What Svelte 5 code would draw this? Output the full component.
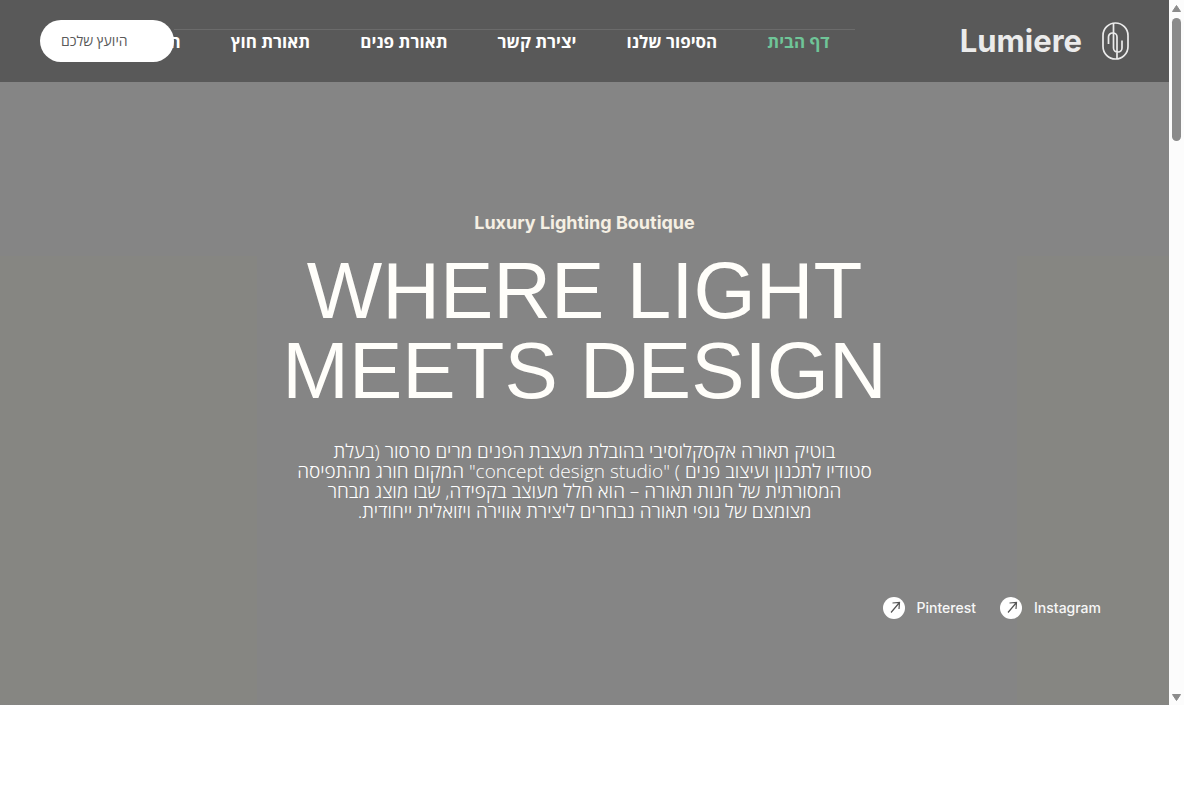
<script>
	const navItems = [
		{ label: 'דף הבית', href: '#home', current: true },
		{ label: 'הסיפור שלנו', href: '#story' },
		{ label: 'יצירת קשר', href: '#contact' },
		{ label: 'תאורת פנים', href: '#indoor' },
		{ label: 'תאורת חוץ', href: '#outdoor' },
		{ label: 'השראה', href: '#inspiration' }
	];

	const socialLinks = [
		{ label: 'Pinterest', href: '#pinterest' },
		{ label: 'Instagram', href: '#instagram' }
	];

	const introLines = [
		'בוטיק תאורה אקסקלוסיבי בהובלת מעצבת הפנים מרים סרסור (בעלת',
		'סטודיו לתכנון ועיצוב פנים ) "concept design studio" המקום חורג מהתפיסה',
		'המסורתית של חנות תאורה – הוא חלל מעוצב בקפידה, שבו מוצג מבחר',
		'מצומצם של גופי תאורה נבחרים ליצירת אווירה ויזואלית ייחודית.'
	];
</script>

<div class="frame">
	<div class="page" dir="rtl">
		<header class="header">
			<a class="brand" href="#home">
				<svg class="brand__mark" viewBox="0 0 27 38" aria-hidden="true">
					<rect x="1" y="1" width="25" height="36" rx="12.5" />
					<path d="M11.500 1v25a4 4 0 0 0 4 4h.5a4 4 0 0 0 4-4v-7.500M6.500 22v-7a4 4 0 0 1 4-4h.5a4 4 0 0 1 4 4v22" />
				</svg>
				<span class="brand__name">Lumiere</span>
			</a>

			<nav class="nav" aria-label="ראשי">
				<ul class="nav__list">
					{#each navItems as item}
						<li>
							<a
								class="nav__link"
								class:nav__link--current={item.current}
								href={item.href}
								aria-current={item.current ? 'page' : undefined}>{item.label}</a
							>
						</li>
					{/each}
				</ul>
			</nav>

			<button class="advisor" type="button">היועץ שלכם</button>
		</header>

		<main class="hero">
			<p class="hero__eyebrow" dir="ltr">Luxury Lighting Boutique</p>
			<h1 class="hero__title" dir="ltr">WHERE LIGHT<br />MEETS DESIGN</h1>
			<p class="hero__intro">
				{#each introLines as line, i}
					{#if i > 0}<br />{/if}{line}
				{/each}
			</p>

			<ul class="social" dir="ltr">
				{#each socialLinks as link}
					<li>
						<a class="social__link" href={link.href}>
							<svg class="social__icon" viewBox="0 0 22 22" aria-hidden="true">
								<circle cx="11" cy="11" r="11" />
								<path d="M8 15.500 16.500 5.500M9.500 6l7-.5-.5 6.500" />
							</svg>
							{link.label}
						</a>
					</li>
				{/each}
			</ul>
		</main>
	</div>

	<div class="scrollbar" aria-hidden="true">
		<svg viewBox="0 0 9 7"><path d="M4.500 0.500 8.500 6.500h-8z" /></svg>
		<div class="scrollbar__track"><div class="scrollbar__thumb"></div></div>
		<svg viewBox="0 0 9 7"><path d="M4.500 6.500 8.500 0.500h-8z" /></svg>
	</div>
</div>

<style>
	:global(body) {
		background: #fff;
	}

	ul {
		list-style: none;
		margin: 0;
		padding: 0;
	}

	a {
		color: inherit;
		text-decoration: none;
	}

	.frame {
		display: flex;
		margin-right: 16px;
		font-family: 'Open Sans', 'Noto Sans', sans-serif;
	}

	.page {
		flex: 1;
		min-width: 0;
	}

	.header {
		display: flex;
		align-items: center;
		padding: 20px 40px;
		overflow: hidden;
		background: #595959;
	}

	.brand {
		display: flex;
		align-items: center;
		gap: 20px;
		margin-left: 105px;
		color: #ebebeb;
	}
	.brand__mark {
		width: 27px;
		height: 38px;
		fill: none;
		stroke: #ebebeb;
		stroke-width: 1.7;
	}
	.brand__name {
		font-family: Inter, sans-serif;
		font-size: 31px;
		font-weight: 700;
		line-height: 40px;
	}

	.nav {
		flex: 1;
		min-width: 0;
		border-top: 1px solid #6b6b6b;
	}
	.nav__list {
		display: flex;
	}
	.nav__link {
		display: block;
		padding: 0 25px;
		color: #fff;
		font-size: 17px;
		font-weight: 700;
		line-height: 24px;
		white-space: nowrap;
	}
	.nav__link--current {
		color: #6fc598;
	}

	.advisor {
		position: relative;
		flex: none;
		padding: 0 46px 0 21px;
		border: 0;
		border-radius: 21px;
		background: #fff;
		color: #595959;
		font: inherit;
		font-size: 14px;
		line-height: 42px;
	}

	.hero {
		padding: 128px 68px 86px;
		background: #858585
			linear-gradient(90deg, #868682 22%, #858585 22%, #858585 87%, #868682 87%) bottom / 100% 72%
			no-repeat;
		text-align: center;
	}
	.hero__eyebrow {
		margin: 0 0 15px;
		color: #f5efe3;
		font-family: Inter, sans-serif;
		font-size: 18px;
		font-weight: 700;
		line-height: 26px;
	}
	.hero__title {
		margin: 0 0 30px;
		color: #fffefa;
		font-family: 'Liberation Sans', Arial, sans-serif;
		font-size: 80px;
		font-weight: 400;
		line-height: 80px;
	}
	.hero__intro {
		margin: 0 0 76px;
		color: #fff;
		font-size: 19px;
		font-weight: 300;
		line-height: 20px;
	}

	.social {
		display: flex;
		justify-content: flex-end;
		gap: 24px;
	}
	.social__link {
		display: flex;
		align-items: center;
		gap: 12px;
		color: #f7f7f7;
		font-family: Inter, sans-serif;
		font-size: 14px;
		font-weight: 500;
		line-height: 22px;
	}
	.social__icon {
		width: 22px;
		height: 22px;
		fill: #fff;
	}
	.social__icon path {
		fill: none;
		stroke: #555;
		stroke-width: 1.2;
	}

	.scrollbar {
		display: flex;
		flex-direction: column;
		align-items: center;
		gap: 6px;
		width: 15px;
		padding: 5px 0 4px;
		box-sizing: border-box;
		background: #fcfcfc;
	}
	.scrollbar svg {
		width: 9px;
		height: 7px;
		fill: #8b8b8b;
		stroke: #8b8b8b;
		stroke-linejoin: round;
	}
	.scrollbar__track {
		flex: 1;
	}
	.scrollbar__thumb {
		width: 9px;
		height: 123px;
		border-radius: 5px;
		background: #8b8b8b;
	}
</style>
